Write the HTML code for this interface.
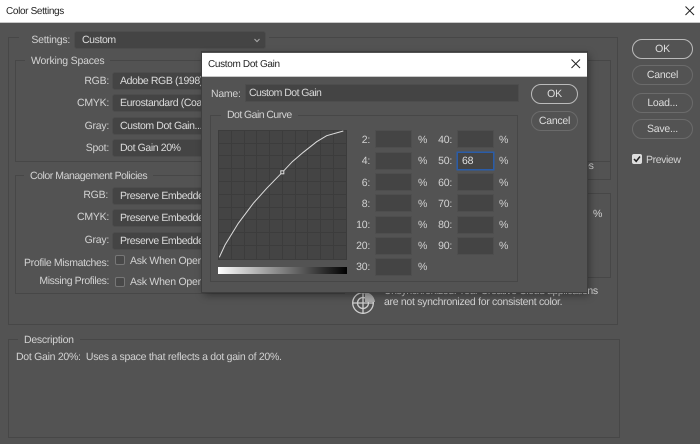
<!DOCTYPE html>
<html><head><meta charset="utf-8"><style>
html,body{margin:0;padding:0}
body{width:700px;height:444px;overflow:hidden;position:relative;background:#535353;font-family:"Liberation Sans",sans-serif;font-size:10.5px;color:#d2d2d2;letter-spacing:-.25px;text-rendering:geometricPrecision}
#w{position:absolute;left:0;top:0;width:700px;height:444px;filter:blur(.3px)}
.a{position:absolute;white-space:nowrap;line-height:14px}
.r{text-align:right}
.box{position:absolute;box-sizing:border-box;border:1px solid #474747}
.sel{position:absolute;box-sizing:border-box;background:#444;border:1px solid #4d4d4d;border-radius:3px;color:#dcdcdc;line-height:17px;padding-left:7px;white-space:nowrap;overflow:hidden;height:18px;letter-spacing:-.4px}
.btn{position:absolute;box-sizing:border-box;border:1px solid #6b6b6b;border-radius:10px;text-align:center;color:#dcdcdc;line-height:18px;height:20px}
.btn.p{border:1px solid #bbb}
.lg{position:absolute;background:#535353;padding:0 6px;line-height:14px;white-space:nowrap}
.inp{position:absolute;box-sizing:border-box;width:37px;height:18px;background:#444;border:1px solid #4e4e4e}
.t{font-size:10px;color:#222}
</style></head><body><div id="w">
<div class="a" style="left:0;top:0;width:700px;height:23px;background:#fff;border-bottom:1px solid #c8c8c8;box-sizing:border-box"></div>
<div class="a t" style="left:6px;top:5px;letter-spacing:-.35px">Color Settings</div>
<svg class="a" style="left:684px;top:5px" width="12" height="12" viewBox="0 0 12 12"><path d="M1.500 1.500L10 10M10 1.500L1.500 10" stroke="#222" stroke-width="1" fill="none"/></svg>

<div class="box" style="left:8px;top:37px;width:610px;height:288px"></div>
<div class="a" style="left:19px;top:30px;width:250px;height:18px;background:#535353"></div>
<div class="a r" style="left:20px;width:50px;top:33px">Settings:</div>
<div class="sel" style="left:74px;top:31px;width:192px">Custom<svg style="position:absolute;right:5px;top:6px" width="6" height="5" viewBox="0 0 6 5"><path d="M.5 1L3 3.600 5.500 1" stroke="#aaa" fill="none"/></svg></div>

<div class="box" style="left:15px;top:60px;width:596px;height:102px"></div>
<div class="lg" style="left:25px;top:54px;letter-spacing:-.2px">Working Spaces</div>
<div class="a r" style="left:60px;width:49px;top:74px">RGB:</div><div class="sel" style="left:112px;top:72px;width:120px">Adobe RGB (1998)</div>
<div class="a r" style="left:60px;width:49px;top:96px">CMYK:</div><div class="sel" style="left:112px;top:94px;width:120px">Eurostandard (Coated)</div>
<div class="a r" style="left:60px;width:49px;top:119px">Gray:</div><div class="sel" style="left:112px;top:117px;width:120px">Custom Dot Gain...</div>
<div class="a r" style="left:60px;width:49px;top:141px">Spot:</div><div class="sel" style="left:112px;top:139px;width:120px">Dot Gain 20%</div>

<div class="box" style="left:15px;top:175px;width:330px;height:119px"></div>
<div class="lg" style="left:24px;top:169px;letter-spacing:-.45px">Color Management Policies</div>
<div class="a r" style="left:60px;width:48px;top:188px">RGB:</div><div class="sel" style="left:112px;top:187px;width:120px">Preserve Embedded</div>
<div class="a r" style="left:60px;width:49px;top:210px">CMYK:</div><div class="sel" style="left:112px;top:209px;width:120px">Preserve Embedded</div>
<div class="a r" style="left:60px;width:49px;top:233px">Gray:</div><div class="sel" style="left:112px;top:232px;width:120px">Preserve Embedded</div>
<div class="a r" style="left:10px;width:99px;top:256px;letter-spacing:-.35px">Profile Mismatches:</div>
<div class="inp" style="left:115px;top:255px;width:10px;height:10px;border:1px solid #777;border-radius:2px;background:#484848"></div>
<div class="a" style="left:130px;top:254px">Ask When Opening</div>
<div class="a r" style="left:10px;width:99px;top:274px;letter-spacing:-.4px">Missing Profiles:</div>
<div class="inp" style="left:115px;top:277px;width:10px;height:10px;border:1px solid #777;border-radius:2px;background:#484848"></div>
<div class="a" style="left:130px;top:275px">Ask When Opening</div>

<div class="box" style="left:540px;top:60px;width:71px;height:120px"></div>
<div class="box" style="left:540px;top:193px;width:71px;height:85px"></div>
<div class="a" style="left:593px;top:207px">%</div>
<div class="a" style="left:583px;top:159px">es</div>

<svg class="a" style="left:350px;top:290px" width="26" height="26" viewBox="0 0 26 26"><g fill="none" stroke="#cfcfcf" stroke-width="1.300"><circle cx="13" cy="13" r="10.300"/><circle cx="13" cy="13" r="5.500"/><path d="M13 2.500V24M2.500 13H24"/></g><path d="M15 2A11 11 0 0 1 25 12H15Z" fill="#a8a8a8"/></svg>
<div class="a" style="left:384px;top:284px;letter-spacing:-.4px">Unsynchronized: Your Creative Cloud applications</div>
<div class="a" style="left:384px;top:295px;letter-spacing:-.3px">are not synchronized for consistent color.</div>

<div class="box" style="left:8px;top:339px;width:612px;height:99px"></div>
<div class="lg" style="left:18px;top:333px">Description</div>
<div class="a" style="left:16px;top:350px;letter-spacing:-.28px">Dot Gain 20%:&nbsp; Uses a space that reflects a dot gain of 20%.</div>

<div class="btn p" style="left:632px;top:39px;width:61px">OK</div>
<div class="btn" style="left:632px;top:65px;width:61px">Cancel</div>
<div class="btn" style="left:632px;top:93px;width:61px">Load...</div>
<div class="btn" style="left:632px;top:119px;width:61px">Save...</div>
<div class="a" style="left:632px;top:154px;width:10px;height:10px;background:#ddd;border-radius:2px"><svg style="position:absolute;left:1px;top:1px" width="8" height="8" viewBox="0 0 8 8"><path d="M1 4L3.200 6.300 7 1.500" stroke="#222" stroke-width="1.500" fill="none"/></svg></div>
<div class="a" style="left:646px;top:153px;letter-spacing:-.4px">Preview</div>

<!-- Dialog -->
<div class="a" style="left:202px;top:52px;width:385px;height:240px;background:#535353;box-shadow:2px 3px 8px rgba(0,0,0,.4);outline:1px solid #3e3e3e"></div>
<div class="a" style="left:202px;top:53px;width:385px;height:24px;background:#fff;border-bottom:1px solid #c8c8c8;box-sizing:border-box"></div>
<div class="a t" style="left:208px;top:58px;letter-spacing:-.33px">Custom Dot Gain</div>
<svg class="a" style="left:570px;top:58px" width="12" height="12" viewBox="0 0 12 12"><path d="M1.500 1.500L10 10M10 1.500L1.500 10" stroke="#222" fill="none"/></svg>
<div class="a" style="left:211px;top:87px">Name:</div>
<div class="sel" style="left:245px;top:84px;width:274px;border-radius:0;color:#d8d8d8;padding-left:3px;letter-spacing:-.55px">Custom Dot Gain</div>
<div class="box" style="left:210px;top:115px;width:308px;height:167px"></div>
<div class="lg" style="left:221px;top:108px;letter-spacing:-.55px">Dot Gain Curve</div>
<div class="btn p" style="left:531px;top:84px;width:47px">OK</div>
<div class="btn" style="left:531px;top:111px;width:47px">Cancel</div>

<svg class="a" style="left:218px;top:130px" width="129" height="130" viewBox="0 0 129 130">
<rect x="0" y="0" width="129" height="130" fill="#444"/>
<g stroke="#3c3c3c" stroke-width="1"><path d="M.5 0V130M13.500 0V130M26.500 0V130M38.500 0V130M51.500 0V130M64.500 0V130M77.500 0V130M89.500 0V130M102.500 0V130M115.500 0V130M128.500 0V130M0 .5H129M0 13.500H129M0 25.500H129M0 38.500H129M0 51.500H129M0 64.500H129M0 77.500H129M0 89.500H129M0 102.500H129M0 115.500H129M0 129.500H129"/></g>
<path d="M1.300 127.300L7 115 20.300 93.300 35.300 73.300 48.700 58.300 64.300 42.300 74.300 31.700 85.300 22.300 98.700 11.700 108.700 5.700 125.300 1" fill="none" stroke="#ddd" stroke-width="1"/>
<rect x="62.800" y="40.800" width="3" height="3" fill="#444" stroke="#ddd"/>
</svg>
<div class="a" style="left:218px;top:267px;width:129px;height:7px;background:linear-gradient(90deg,#fff,#000)"></div>

<div class="a r" style="left:355px;width:15px;top:133px">2:</div><div class="inp" style="left:375px;top:130px"></div><div class="a" style="left:418px;top:133px">%</div>
<div class="a r" style="left:355px;width:15px;top:154px">4:</div><div class="inp" style="left:375px;top:152px"></div><div class="a" style="left:418px;top:154px">%</div>
<div class="a r" style="left:355px;width:15px;top:176px">6:</div><div class="inp" style="left:375px;top:173px"></div><div class="a" style="left:418px;top:176px">%</div>
<div class="a r" style="left:355px;width:15px;top:197px">8:</div><div class="inp" style="left:375px;top:194px"></div><div class="a" style="left:418px;top:197px">%</div>
<div class="a r" style="left:355px;width:15px;top:218px">10:</div><div class="inp" style="left:375px;top:216px"></div><div class="a" style="left:418px;top:218px">%</div>
<div class="a r" style="left:355px;width:15px;top:239px">20:</div><div class="inp" style="left:375px;top:237px"></div><div class="a" style="left:418px;top:239px">%</div>
<div class="a r" style="left:355px;width:15px;top:260px">30:</div><div class="inp" style="left:375px;top:258px"></div><div class="a" style="left:418px;top:260px">%</div>

<div class="a r" style="left:432px;width:20px;top:133px">40:</div><div class="inp" style="left:457px;top:130px"></div><div class="a" style="left:499px;top:133px">%</div>
<div class="a r" style="left:432px;width:20px;top:154px">50:</div><div class="a" style="left:457px;top:152px;width:37px;height:18px;box-sizing:border-box;background:#444;border:1px solid #2a5ca8;box-shadow:0 0 0 .5px #2a5ca8;color:#e0e0e0;padding-left:4px;line-height:16px">68</div><div class="a" style="left:499px;top:154px">%</div>
<div class="a r" style="left:432px;width:20px;top:176px">60:</div><div class="inp" style="left:457px;top:173px"></div><div class="a" style="left:499px;top:176px">%</div>
<div class="a r" style="left:432px;width:20px;top:197px">70:</div><div class="inp" style="left:457px;top:194px"></div><div class="a" style="left:499px;top:197px">%</div>
<div class="a r" style="left:432px;width:20px;top:218px">80:</div><div class="inp" style="left:457px;top:216px"></div><div class="a" style="left:499px;top:218px">%</div>
<div class="a r" style="left:432px;width:20px;top:239px">90:</div><div class="inp" style="left:457px;top:237px"></div><div class="a" style="left:499px;top:239px">%</div>
</div></body></html>
